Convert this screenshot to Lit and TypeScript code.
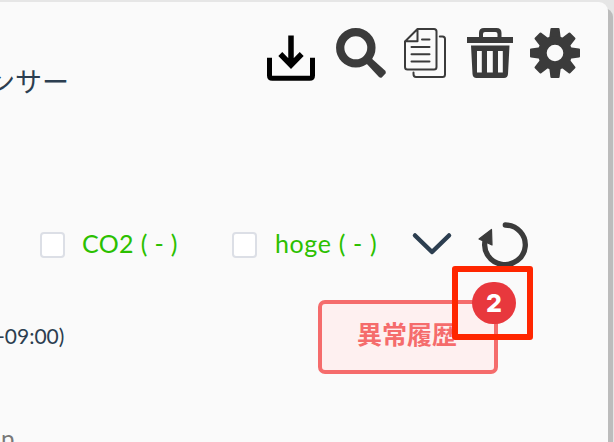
import { LitElement, html, css, svg } from "lit";
import { customElement, property } from "lit/decorators.js";

const toothAngles = [0, 45, 90, 135, 180, 225, 270, 315];

const icons: Record<string, { w: number; h: number; body: unknown }> = {
  download: {
    w: 50, h: 52,
    body: svg`<g fill="none" stroke="#000">
      <path d="M3.500 29.800V47.500Q3.500 50.300 6.300 50.300H43.700Q46.500 50.300 46.500 47.500V29.800" stroke-width="5"/>
      <path d="M25 7.500V37M14.300 26L25 37L35.700 26" stroke-width="5.500"/></g>`,
  },
  search: {
    w: 50, h: 50,
    body: svg`<circle cx="19.8" cy="19.8" r="15.6" fill="none" stroke="#3b3b3b" stroke-width="8.3"/>
      <path d="M29 34L34 29L49 42.500Q50.500 44 49.500 45.500L46 49.300Q44.500 50.500 43 49Z" fill="#3b3b3b"/>`,
  },
  copy: {
    w: 42, h: 50,
    body: svg`<g fill="none" stroke="#3b3b3b" stroke-width="2" stroke-linecap="round" stroke-linejoin="round">
      <path d="M13.500 1H30Q32.500 1 32.500 3.500V39Q32.500 41.500 30 41.500H3.500Q1 41.500 1 39V13.500ZM13.500 1V13.300H1"/>
      <path d="M18 11.500H25.500M7.500 19H25.500M7.500 26.300H25.500M7.500 33.600H25.500M35.800 8.500H38.500Q41 8.500 41 11V46.500Q41 49 38.500 49H12Q9.500 49 9.500 46V44.500"/></g>`,
  },
  trash: {
    w: 46, h: 50,
    body: svg`<g fill="#3b3b3b"><path d="M0 9H12V5Q12 0 17 0H29.500Q34.500 0 34.500 5V9H46V15H0ZM16 9H30.500V6Q30.500 4 28.500 4H18Q16 4 16 6Z" fill-rule="evenodd"/>
      <path fill-rule="evenodd" d="M4 17.500H42.500L41 46Q40.700 50 37 50H9.500Q5.800 50 5.500 46ZM10 23V44.500H14.800V23ZM20 23V44.500H25.800V23ZM31 23V44.500H35.800V23Z"/></g>`,
  },
  gear: {
    w: 50, h: 50,
    body: svg`<g fill="#3b3b3b">${toothAngles.map(
      (a) => svg`<path d="M19 12L20.400 1Q20.500 0 21.500 0H28.500Q29.500 0 29.600 1L31 12Z" transform="rotate(${a} 25 25)"/>`
    )}</g><circle cx="25" cy="25" r="12.700" fill="none" stroke="#3b3b3b" stroke-width="8.800"/>`,
  },
  chevron: {
    w: 40, h: 24,
    body: svg`<path d="M3 3.500L20 20L37 3.500" fill="none" stroke="#2c3e50" stroke-width="4.500" stroke-linecap="round" stroke-linejoin="round"/>`,
  },
  reload: {
    w: 50, h: 46,
    body: svg`<path d="M27.300 4A20.300 19.800 0 1 1 7.300 19" fill="none" stroke="#3b3b3b" stroke-width="5.300" stroke-linecap="round"/>
      <path d="M1 18L13.500 8.500L14 24Z" fill="#3b3b3b" stroke="#3b3b3b" stroke-width="1.200" stroke-linejoin="round"/>`,
  },
};

@customElement("glyph-icon")
class GlyphIcon extends LitElement {
  @property() name = "";
  static styles = css`
    :host { display: block; flex: none; }
    svg { display: block; overflow: visible; }
  `;
  render() {
    const i = icons[this.name];
    return html`<svg width=${i.w} height=${i.h} viewBox="0 0 ${i.w} ${i.h}">${i.body}</svg>`;
  }
}

@customElement("app-root")
class AppRoot extends LitElement {
  static styles = css`
    :host {
      display: block;
      height: 442px;
      overflow: hidden;
      background: #e6e6e6;
      font-family: Lato, "Noto Sans CJK JP", sans-serif;
      color: #2c3e50;
    }
    * { box-sizing: border-box; }
    .page { height: 442px; padding-top: 2px; overflow: hidden; position: relative; }
    .card {
      width: 608px;
      height: 460px;
      background: #fafafa;
      border-radius: 0 9px 0 0;
      box-shadow: 5px 6px 0 #bcbcbc;
    }
    .head { display: flex; height: 212px; padding: 26px 28px 0 0; justify-content: space-between; }
    .title {
      margin: 34px 0 0 -12px;
      font: 400 27px/38px "Noto Sans CJK JP", sans-serif;
      white-space: nowrap;
    }
    .tools { display: flex; }
    .search { margin-left: 20px; }
    .copy { margin-left: 18px; }
    .trash { margin-left: 21px; }
    .gear { margin-left: 17px; }
    .filters { display: flex; height: 58px; align-items: center; padding-left: 40px; }
    .box { flex: none; width: 25px; height: 26px; border: 2px solid #dcdfe6; border-radius: 4px; background: #fff; margin-top: 4px; }
    .label { flex: none; color: #2bc000; font-size: 25px; line-height: 32px; white-space: pre; }
    .co2 { width: 150px; margin-left: 17px; letter-spacing: 0.35px; }
    .hoge { width: 120px; margin-left: 18px; letter-spacing: 0.65px; }
    .chevron { margin-left: 17px; margin-top: 2px; }
    .reload { margin: 2px 0 0 26px; }
    .detail { display: flex; padding-top: 28px; height: 155px; }
    .time { width: 318px; padding-top: 21px; font-size: 21px; line-height: 30px; white-space: nowrap; }
    .time span { margin-left: -3px; }
    .history {
      position: relative;
      width: 180px;
      height: 74px;
      border: 4px solid #f56c6c;
      border-radius: 7px;
      background: #fef0f0;
      color: #f56c6c;
      padding-right: 2px;
      font: 700 25px/59px "Noto Sans CJK JP", sans-serif;
      text-align: center;
    }
    .badge {
      position: absolute;
      right: -22px;
      top: -22px;
      width: 44px;
      height: 42px;
      border-radius: 21px;
      background: #e8383d;
      color: #fff;
      font: 800 25px/42px Inter, sans-serif;
    }
    .mark {
      position: absolute;
      left: 452px;
      top: 266px;
      width: 81px;
      height: 74px;
      border: 6px solid #ff2600;
      border-radius: 3px;
    }
    .foot { color: #777; font-size: 24px; line-height: 30px; margin: -4px 0 0 -11px; }
  `;
  render() {
    return html`<div class="page">
      <div class="card">
        <div class="head">
          <div class="title">ンサー</div>
          <div class="tools">
            <glyph-icon name="download"></glyph-icon>
            <glyph-icon class="search" name="search"></glyph-icon>
            <glyph-icon class="copy" name="copy"></glyph-icon>
            <glyph-icon class="trash" name="trash"></glyph-icon>
            <glyph-icon class="gear" name="gear"></glyph-icon>
          </div>
        </div>
        <div class="filters">
          <div class="box"></div><div class="label co2">CO2 ( - )</div>
          <div class="box"></div><div class="label hoge">hoge ( - )</div>
          <glyph-icon class="chevron" name="chevron"></glyph-icon>
          <glyph-icon class="reload" name="reload"></glyph-icon>
        </div>
        <div class="detail">
          <div class="time"><span>-09:00)</span></div>
          <div class="history">異常履歴<div class="badge">2</div></div>
        </div>
        <div class="foot">ap</div>
      </div>
      <div class="mark"></div>
    </div>`;
  }
}
